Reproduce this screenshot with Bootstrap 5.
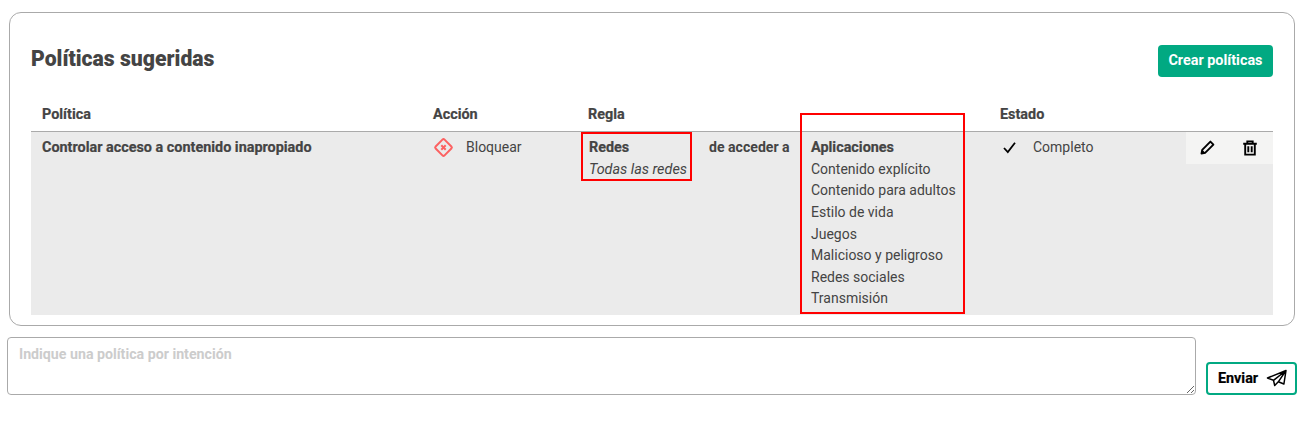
<!doctype html>
<html lang="es">
<head>
<meta charset="utf-8">
<title>Políticas sugeridas</title>
<link rel="stylesheet" href="https://cdn.jsdelivr.net/npm/bootstrap@5.3.0/dist/css/bootstrap.min.css">
<style>
html,body{background:#fff;}
body{font-family:Roboto,"Liberation Sans",sans-serif;font-size:14px;line-height:21.6px;color:#444;overflow:hidden;}
.page-wrap{padding:12px 14px 0 7px;}
.panel-box{margin-left:2px;margin-right:2px;height:314px;border:1px solid #aaa;border-radius:12px;padding:32px 21px 0 21px;}
.panel-head{height:32px;margin-bottom:21px;}
.panel-title{font-size:21.2px;font-weight:900;line-height:28px;color:#444;margin:-4px 0 0;}
.btn-hpe{background:#01a982;color:#fff;font-weight:700;font-size:14.4px;line-height:20px;height:32px;padding:5px 10.5px;border:0;border-radius:4px;}
.btn-hpe:hover{background:#01a982;color:#fff;}
.fw-heavy{font-weight:700;font-size:14.4px;-webkit-text-stroke:.2px currentColor;}
.pol-table{table-layout:fixed;width:1242px;margin:0;border-collapse:collapse;color:#444;}
.pol-table th{font-weight:700;font-size:14.4px;-webkit-text-stroke:.2px currentColor;padding:0 11px 5px;height:33px;line-height:21.6px;border-bottom:1px solid #aaa;vertical-align:bottom;background:transparent;color:#444;box-shadow:none;}
.pol-table td{background:#ebebeb;padding:5px 11px 0;height:184px;vertical-align:top;border:0;color:#444;box-shadow:none;}
.pol-table td.act-cell{padding:0;}
.act-box{background:#f4f4f3;height:32px;padding:8px 15px 0 14px;}
.act-box svg{display:block;}
.red-a{position:relative;margin-left:-6px;padding:.7px 5px 0 7px;}
.red-a::after{content:"";position:absolute;left:-1px;right:0;top:-5px;height:49px;border:2px solid #f00;}
.red-a .fst-italic{font-size:14.4px;}
.join-txt{flex:0 0 102px;margin-left:17px;font-size:14.1px;}
.red-b{position:relative;padding-top:.7px;}
.red-b::after{content:"";position:absolute;left:-11px;top:-24px;width:165px;height:201px;border:2px solid #f00;}
.chat-box{width:1189px;height:58px;margin-top:11px;border:1px solid #aaa;border-radius:4px;padding:6px 11px;font-weight:700;font-size:14.2px;line-height:21px;display:block;color:#444;}
.chat-box::placeholder{color:#ccc;opacity:1;}
.chat-box:focus{outline:0;box-shadow:none;border-color:#aaa;}
.send-btn{height:33px;width:91px;margin-left:10px;border:2px solid #01a982;border-radius:4px;background:#fff;color:#000;font-weight:700;font-size:14.4px;-webkit-text-stroke:.2px currentColor;padding:0 0 0 2px;}
</style>
</head>
<body>
<div class="page-wrap">
  <div class="panel-box">
    <div class="panel-head d-flex justify-content-between align-items-center">
      <h2 class="panel-title">Políticas sugeridas</h2>
      <button type="button" class="btn btn-hpe">Crear políticas</button>
    </div>
    <table class="table pol-table">
      <colgroup><col style="width:391px"><col style="width:155px"><col style="width:412px"><col style="width:197px"><col style="width:87px"></colgroup>
      <thead><tr><th>Política</th><th>Acción</th><th>Regla</th><th>Estado</th><th></th></tr></thead>
      <tbody><tr>
        <td><span class="fw-heavy">Controlar acceso a contenido inapropiado</span></td>
        <td>
          <div class="d-flex align-items-start gap-2">
            <svg width="21" height="21" viewBox="0 0 21 21" fill="none" stroke="#fc6161" stroke-width="2" class="flex-shrink-0 me-1"><rect x="4.2" y="4.2" width="12.6" height="12.6" rx="1.5" transform="rotate(45 10.5 10.5)"/><path d="M8.3 8.3l4.4 4.4M12.7 8.3l-4.4 4.4"/></svg>
            <span>Bloquear</span>
          </div>
        </td>
        <td>
          <div class="d-flex align-items-start">
            <div class="red-a"><div class="fw-heavy">Redes</div><div class="fst-italic">Todas las redes</div></div>
            <div class="join-txt fw-bold">de acceder a</div>
            <div class="red-b">
              <div class="fw-heavy">Aplicaciones</div>
              <div>Contenido explícito</div>
              <div>Contenido para adultos</div>
              <div>Estilo de vida</div>
              <div>Juegos</div>
              <div>Malicioso y peligroso</div>
              <div>Redes sociales</div>
              <div>Transmisión</div>
            </div>
          </div>
        </td>
        <td>
          <div class="d-flex align-items-start gap-3">
            <svg width="17" height="21" viewBox="0 0 17 21" fill="none" stroke="#000" stroke-width="1.8" class="flex-shrink-0"><path d="M4 11l3.8 4L15 5.8"/></svg>
            <span>Completo</span>
          </div>
        </td>
        <td class="act-cell">
          <div class="act-box d-flex justify-content-between">
            <svg width="15" height="15" viewBox="0 0 15 15"><path d="M10.4 1.6l3 3-8.3 8.3-3.6.7.7-3.8z" fill="none" stroke="#000" stroke-width="1.9" stroke-linejoin="round"/><path d="M1.4 13.7l.7-4.2 3.4 3.4z" fill="#000"/></svg>
            <svg width="16" height="16" viewBox="0 0 16 16" fill="none" stroke="#000" stroke-width="1.9"><path d="M1.2 3.7h13.6M5.3 3.7V1.4h5.4v2.3M3.2 3.7v10.9h9.6V3.7M6.3 6.3v6M9.7 6.3v6"/></svg>
          </div>
        </td>
      </tr></tbody>
    </table>
  </div>
  <div class="d-flex align-items-end">
    <textarea class="form-control chat-box" placeholder="Indique una política por intención"></textarea>
    <button type="button" class="send-btn d-flex align-items-center justify-content-center gap-2">
      <span>Enviar</span>
      <svg width="21" height="19" viewBox="0 0 21 19" fill="none" stroke="#000" stroke-width="1.5" stroke-linejoin="round"><path d="M20 1.5L1.5 9l6 2.3 1.2 5.2 3.6-3.7 5.6 2.2zM20 1.5L7.5 11.3M20 1.5L12.3 12.8"/></svg>
    </button>
  </div>
</div>
<script src="https://cdn.jsdelivr.net/npm/bootstrap@5.3.0/dist/js/bootstrap.bundle.min.js"></script>
</body>
</html>
